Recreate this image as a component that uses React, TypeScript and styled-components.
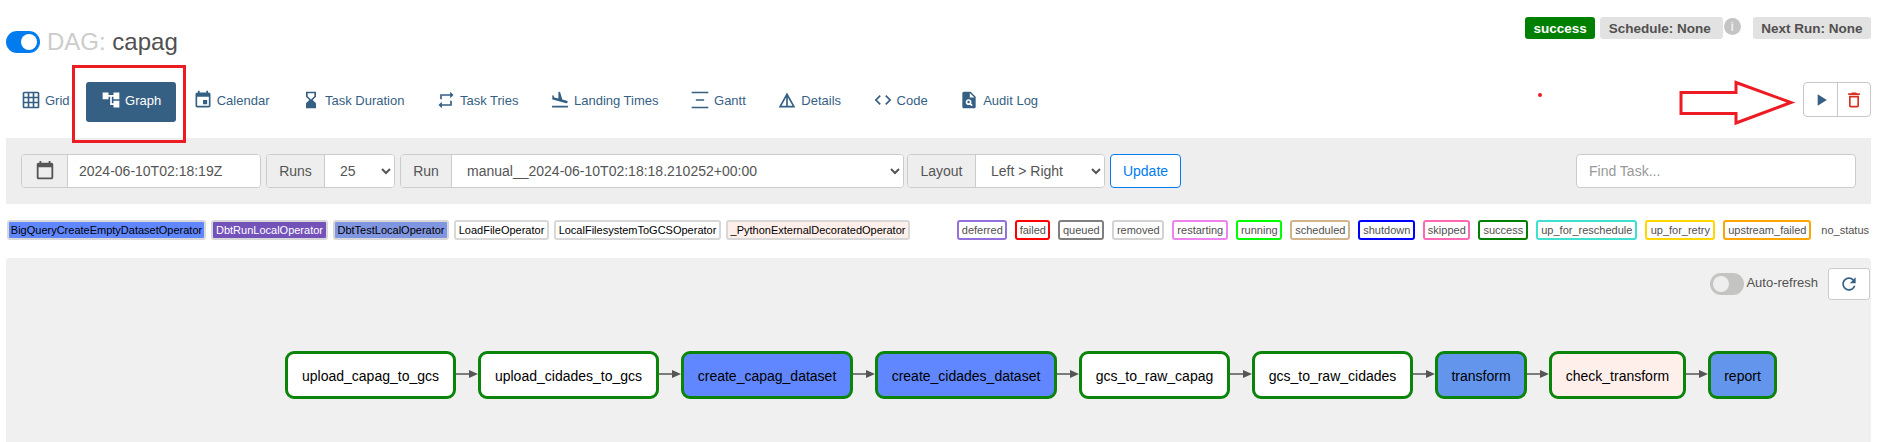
import React from 'react';
import styled, { createGlobalStyle } from 'styled-components';

const icons: Record<string, string> = {
    grid: 'M20 2H4c-1.1 0-2 .9-2 2v16c0 1.1.9 2 2 2h16c1.1 0 2-.9 2-2V4c0-1.1-.9-2-2-2zM8 20H4v-4h4v4zm0-6H4v-4h4v4zm0-6H4V4h4v4zm6 12h-4v-4h4v4zm0-6h-4v-4h4v4zm0-6h-4V4h4v4zm6 12h-4v-4h4v4zm0-6h-4v-4h4v4zm0-6h-4V4h4v4z',
    graph: 'M22 11V3h-7v3H9V3H2v8h7V8h2v10h4v3h7v-8h-7v3h-2V8h2v3z',
    calendar: 'M17 12h-5v5h5v-5zM16 1v2H8V1H6v2H5c-1.11 0-1.99.9-1.99 2L3 19c0 1.1.89 2 2 2h14c1.1 0 2-.9 2-2V5c0-1.1-.9-2-2-2h-1V1h-2zm3 18H5V8h14v11z',
    hourglass: 'M18 22l-.01-6L14 12l3.99-4.01L18 2H6v6l4 4-4 3.99V22h12zM8 7.5V4h8v3.5l-4 4-4-4z',
    repeat: 'M7 7h10v3l4-4-4-4v3H5v6h2V7zm10 10H7v-3l-4 4 4 4v-3h12v-6h-2v4z',
    land: 'M2.5 19h19v2h-19zm7.18-5.73l4.35 1.16 5.31 1.42c.8.21 1.62-.26 1.84-1.06.21-.8-.26-1.62-1.06-1.84l-5.31-1.42-2.76-9.02L10.12 2v8.28L5.15 8.95l-.93-2.32-1.45-.39v5.17l1.6.43 5.31 1.43z',
    gantt: 'M2 2h20v2H2zM2 20h20v2H2zM7 11h10v2H7z',
    details: 'M12 3L2 21h20L12 3zm1 5.92L18.6 19H13V8.92zm-2 0V19H5.4L11 8.92z',
    code: 'M9.4 16.6L4.8 12l4.6-4.6L8 6l-6 6 6 6 1.4-1.4zm5.2 0l4.6-4.6-4.6-4.6L16 6l6 6-6 6-1.4-1.4z',
    audit: 'M14 2H6C4.9 2 4.01 2.9 4.01 4L4 20c0 1.1.89 2 1.99 2H18c1.1 0 2-.9 2-2V8L14 2zm1.04 17.45l-1.88-1.88c-1.33.71-3.01.53-4.13-.59-1.37-1.37-1.37-3.58 0-4.95 1.37-1.37 3.58-1.37 4.95 0 1.12 1.12 1.31 2.8.59 4.13l1.88 1.88-1.41 1.41zM13 9V3.5L18.5 9H13zM11.5 13a1.5 1.5 0 1 0 0 3 1.5 1.5 0 0 0 0-3z',
    play: 'M8 5v14l11-7z',
    trash: 'M6 19c0 1.1.9 2 2 2h8c1.1 0 2-.9 2-2V7H6v12zM8 9h8v10H8V9zm7.5-5l-1-1h-5l-1 1H5v2h14V4z',
    date: 'M19 3h-1V1h-2v2H8V1H6v2H5c-1.11 0-2 .9-2 2v14c0 1.1.89 2 2 2h14c1.1 0 2-.9 2-2V5c0-1.1-.9-2-2-2zm0 16H5V8h14v11z',
    refresh: 'M17.65 6.35C16.2 4.9 14.21 4 12 4c-4.42 0-7.99 3.58-7.99 8s3.57 8 7.99 8c3.73 0 6.84-2.55 7.73-6h-2.08c-.82 2.33-3.04 4-5.65 4-3.31 0-6-2.69-6-6s2.69-6 6-6c1.66 0 3.14.69 4.22 1.78L13 11h7V4l-2.35 2.35z',
};

const Icon: React.FC<{ name: string; size?: number }> = ({ name, size = 20 }) => (
    <svg width={size} height={size} viewBox="0 0 24 24" fill="currentColor" style={{ flexShrink: 0 }}>
        <path d={icons[name]} fillRule="evenodd" />
    </svg>
);

const tabs = [
    { label: 'Grid', icon: 'grid' },
    { label: 'Graph', icon: 'graph', active: true },
    { label: 'Calendar', icon: 'calendar' },
    { label: 'Task Duration', icon: 'hourglass' },
    { label: 'Task Tries', icon: 'repeat' },
    { label: 'Landing Times', icon: 'land' },
    { label: 'Gantt', icon: 'gantt' },
    { label: 'Details', icon: 'details' },
    { label: 'Code', icon: 'code' },
    { label: 'Audit Log', icon: 'audit' },
];

const operators = [
    { label: 'BigQueryCreateEmptyDatasetOperator', width: 199, bg: '#6087ff' },
    { label: 'DbtRunLocalOperator', width: 117, bg: '#7352ba', fg: '#fff' },
    { label: 'DbtTestLocalOperator', width: 116, bg: '#8196e0' },
    { label: 'LoadFileOperator', width: 95, bg: '#fff' },
    { label: 'LocalFilesystemToGCSOperator', width: 167, bg: '#fff' },
    { label: '_PythonExternalDecoratedOperator', width: 184, bg: '#ffefeb' },
];

const states = [
    { label: 'deferred', width: 50, color: 'mediumpurple' },
    { label: 'failed', width: 35, color: 'red' },
    { label: 'queued', width: 46, color: 'gray' },
    { label: 'removed', width: 52, color: 'lightgrey' },
    { label: 'restarting', width: 56, color: 'violet' },
    { label: 'running', width: 46, color: 'lime' },
    { label: 'scheduled', width: 60, color: 'tan' },
    { label: 'shutdown', width: 57, color: 'blue' },
    { label: 'skipped', width: 47, color: 'hotpink' },
    { label: 'success', width: 50, color: 'green' },
    { label: 'up_for_reschedule', width: 101, color: 'turquoise' },
    { label: 'up_for_retry', width: 70, color: 'gold' },
    { label: 'upstream_failed', width: 88, color: 'orange' },
];

const tasks = [
    { label: 'upload_capag_to_gcs', width: 171, bg: '#fff' },
    { label: 'upload_cidades_to_gcs', width: 181, bg: '#fff' },
    { label: 'create_capag_dataset', width: 172, bg: '#6087ff' },
    { label: 'create_cidades_dataset', width: 182, bg: '#6087ff' },
    { label: 'gcs_to_raw_capag', width: 151, bg: '#fff' },
    { label: 'gcs_to_raw_cidades', width: 161, bg: '#fff' },
    { label: 'transform', width: 92, bg: '#6495ed' },
    { label: 'check_transform', width: 137, bg: '#ffefeb' },
    { label: 'report', width: 69, bg: '#6495ed' },
];

const App: React.FC = () => {
    return (
        <>
            <GlobalStyle />
            <Page>
                <Header>
                    <Title>
                        <Toggle $on />
                        <TitleMuted>DAG:</TitleMuted> capag
                    </Title>
                    <Badges>
                        <Badge $success>success</Badge>
                        <ScheduleBadge>Schedule: None</ScheduleBadge>
                        <InfoDot>i</InfoDot>
                        <NextRunBadge>Next Run: None</NextRunBadge>
                    </Badges>
                </Header>

                <NavRow>
                    <Tabs>
                        {tabs.map(tab => (
                            <Tab key={tab.label} $active={tab.active}>
                                <Icon name={tab.icon} size={20} />
                                {tab.label}
                            </Tab>
                        ))}
                    </Tabs>
                    <ActionGroup>
                        <ActionButton $color="#365f84"><Icon name="play" size={20} /></ActionButton>
                        <ActionButton $color="#d9311f"><Icon name="trash" size={20} /></ActionButton>
                    </ActionGroup>
                </NavRow>

                <Toolbar>
                    <InputGroup $width={240}>
                        <Addon $width={46}><Icon name="date" size={22} /></Addon>
                        <TextField readOnly value="2024-06-10T02:18:19Z" />
                    </InputGroup>
                    <InputGroup $width={129}>
                        <Addon $width={58}>Runs</Addon>
                        <Select defaultValue="25"><option>25</option></Select>
                    </InputGroup>
                    <InputGroup $width={504}>
                        <Addon $width={51}>Run</Addon>
                        <Select defaultValue="m"><option value="m">manual__2024-06-10T02:18:18.210252+00:00</option></Select>
                    </InputGroup>
                    <LayoutGroup $width={198}>
                        <Addon $width={68}>Layout</Addon>
                        <Select defaultValue="lr"><option value="lr">{'Left > Right'}</option></Select>
                    </LayoutGroup>
                    <UpdateButton>Update</UpdateButton>
                    <FindTask placeholder="Find Task..." />
                </Toolbar>

                <LegendRow>
                    <OperatorLegend>
                        {operators.map(op => (
                            <OperatorChip key={op.label} $width={op.width} $bg={op.bg} $fg={op.fg}>{op.label}</OperatorChip>
                        ))}
                    </OperatorLegend>
                    <StateLegend>
                        {states.map(state => (
                            <StateChip key={state.label} $width={state.width} $color={state.color}>{state.label}</StateChip>
                        ))}
                        <NoStatus>no_status</NoStatus>
                    </StateLegend>
                </LegendRow>

                <GraphPanel>
                    <RefreshRow>
                        <Toggle />
                        <RefreshLabel>Auto-refresh</RefreshLabel>
                        <RefreshButton><Icon name="refresh" size={20} /></RefreshButton>
                    </RefreshRow>
                    <Flow>
                        {tasks.map((task, i) => (
                            <React.Fragment key={task.label}>
                                {i > 0 && (
                                    <svg width="22" height="10" viewBox="0 0 22 10" style={{ marginTop: -2 }}>
                                        <path d="M0 5h14" stroke="#555" strokeWidth="1.5" />
                                        <path d="M13 1l9 4-9 4z" fill="#555" />
                                    </svg>
                                )}
                                <TaskNode $bg={task.bg} $width={task.width}>{task.label}</TaskNode>
                            </React.Fragment>
                        ))}
                    </Flow>
                </GraphPanel>

                <GraphHighlight />
                <RedDot />
                <RedArrow width="118" height="46" viewBox="0 0 118 46">
                    <path d="M2 12.5h55V2.5L112 22.5 57 43V33.5H2z" fill="none" stroke="#ed1c24" strokeWidth="3" />
                </RedArrow>
            </Page>
        </>
    );
};

const GlobalStyle = createGlobalStyle`
  html, body {
    margin: 0;
    background: #fff;
    font-family: "Liberation Sans", Arial, sans-serif;
    color: #51504f;
  }
  * {
    box-sizing: border-box;
  }
`;

const Page = styled.div`
  position: relative;
  width: 1887px;
  height: 442px;
  overflow: hidden;
  padding: 0 16px 0 6px;
`;

const Header = styled.header`
  display: flex;
  justify-content: space-between;
  align-items: flex-start;
  height: 82px;
  padding-top: 17px;
`;

const Title = styled.h4`
  display: flex;
  align-items: center;
  margin: 14px 0 0;
  height: 22px;
  font-size: 24px;
  font-weight: 400;
  line-height: 20px;
  white-space: pre;
`;

const TitleMuted = styled.span`
  color: #ccc;
  margin-left: 7px;
`;

const Toggle = styled.span<{ $on?: boolean }>`
  position: relative;
  display: inline-block;
  flex-shrink: 0;
  width: 34px;
  height: 22px;
  border-radius: 11px;
  background: ${p => (p.$on ? '#017cee' : '#c4c4c2')};
  &::after {
    content: '';
    position: absolute;
    top: 3px;
    ${p => (p.$on ? 'right: 3px;' : 'left: 3px;')}
    width: 16px;
    height: 16px;
    border-radius: 50%;
    background: ${p => (p.$on ? '#fff' : '#eee')};
  }
`;

const Badges = styled.div`
  display: flex;
  align-items: flex-start;
`;

const Badge = styled.span<{ $success?: boolean }>`
  display: flex;
  align-items: center;
  height: 22px;
  padding: 0 8.5px;
  margin-right: 5px;
  border-radius: 3px;
  font-size: 13.5px;
  font-weight: 700;
  background: ${p => (p.$success ? '#008000' : '#e2e2e2')};
  color: ${p => (p.$success ? '#fff' : '#51504f')};
`;

const ScheduleBadge = styled(Badge)`
  padding-right: 12px;
  margin-right: 1px;
`;

const NextRunBadge = styled(Badge)`
  margin: 0 0 0 12px;
`;

const InfoDot = styled.span`
  display: flex;
  align-items: center;
  justify-content: center;
  width: 17px;
  height: 17px;
  margin-top: 1px;
  border-radius: 50%;
  background: #c4c4c4;
  color: #eee;
  font-size: 12px;
  font-weight: 700;
`;

const NavRow = styled.div`
  display: flex;
  justify-content: space-between;
  align-items: flex-start;
  height: 56px;
`;

const Tabs = styled.nav`
  display: flex;
  gap: 1.5px;
`;

const Tab = styled.a<{ $active?: boolean }>`
  display: flex;
  align-items: center;
  gap: 4px;
  height: 40px;
  padding: 0 15px 4px;
  border-radius: 3px;
  font-size: 13px;
  background: ${p => (p.$active ? '#365f84' : 'transparent')};
  color: ${p => (p.$active ? '#fff' : '#365f84')};
`;

const ActionGroup = styled.div`
  display: flex;
  height: 35px;
  border: 1px solid #c8c8c8;
  border-radius: 4px;
`;

const ActionButton = styled.span<{ $color: string }>`
  display: flex;
  align-items: center;
  justify-content: center;
  width: 33px;
  color: ${p => p.$color};
  & + & {
    border-left: 1px solid #c8c8c8;
  }
`;

const Toolbar = styled.div`
  display: flex;
  align-items: center;
  height: 66px;
  padding: 0 15px;
  gap: 5px;
  background: #eee;
`;

const InputGroup = styled.div<{ $width: number }>`
  display: flex;
  width: ${p => p.$width}px;
  height: 34px;
  border: 1px solid #ccc;
  border-radius: 4px;
  background: #fff;
  overflow: hidden;
  font-size: 14px;
`;

const LayoutGroup = styled(InputGroup)`
  margin-left: -2px;
`;

const Addon = styled.span<{ $width: number }>`
  display: flex;
  align-items: center;
  justify-content: center;
  flex-shrink: 0;
  width: ${p => p.$width}px;
  background: #eee;
  border-right: 1px solid #ccc;
  color: #555;
`;

const TextField = styled.input`
  flex: 1;
  min-width: 0;
  padding: 0 11px;
  border: 0;
  outline: 0;
  font: inherit;
  color: #555;
`;

const Select = styled.select`
  flex: 1;
  min-width: 0;
  padding: 0 11px;
  border: 0;
  outline: 0;
  background: #fff;
  font: inherit;
  color: #555;
`;

const UpdateButton = styled.button`
  width: 71px;
  height: 34px;
  padding: 0;
  border: 1px solid #017cee;
  border-radius: 4px;
  background: #fff;
  color: #017cee;
  font: inherit;
  font-size: 14px;
`;

const FindTask = styled.input`
  width: 280px;
  height: 34px;
  margin-left: auto;
  padding: 0 12px;
  border: 1px solid #ccc;
  border-radius: 4px;
  outline: 0;
  font: inherit;
  font-size: 14px;
  &::placeholder {
    color: #999;
  }
`;

const LegendRow = styled.div`
  display: flex;
  justify-content: space-between;
  align-items: flex-start;
  height: 54px;
  padding: 16px 2px 0 1px;
`;

const OperatorLegend = styled.div`
  display: flex;
  gap: 5px;
`;

const StateLegend = styled.div`
  display: flex;
  align-items: center;
  gap: 8px;
`;

const OperatorChip = styled.span<{ $width: number; $bg: string; $fg?: string }>`
  width: ${p => p.$width}px;
  height: 20px;
  border: 2px solid #d8d8d8;
  border-radius: 3px;
  font-size: 11px;
  line-height: 16px;
  text-align: center;
  white-space: nowrap;
  background: ${p => p.$bg};
  color: ${p => p.$fg || '#000'};
`;

const StateChip = styled.span<{ $width: number; $color: string }>`
  width: ${p => p.$width}px;
  height: 20px;
  border: 2px solid ${p => p.$color};
  border-radius: 3px;
  font-size: 11px;
  line-height: 16px;
  text-align: center;
  white-space: nowrap;
  background: #fff;
  color: #51504f;
`;

const NoStatus = styled.span`
  margin-left: 2px;
  font-size: 11px;
  color: #51504f;
`;

const GraphPanel = styled.section`
  height: 184px;
  padding-top: 10px;
  border-radius: 4px 4px 0 0;
  background: #f0f0f0;
`;

const RefreshRow = styled.div`
  display: flex;
  align-items: center;
  justify-content: flex-end;
  height: 32px;
  padding-right: 1px;
`;

const RefreshLabel = styled.span`
  margin: 0 10px 0 2px;
  padding-bottom: 3px;
  font-size: 13px;
  color: #51504f;
`;

const RefreshButton = styled.span`
  display: flex;
  align-items: center;
  justify-content: center;
  width: 42px;
  height: 32px;
  border: 1px solid #ccc;
  border-radius: 3px;
  background: #fff;
  color: #365f84;
`;

const Flow = styled.div`
  display: flex;
  align-items: center;
  padding: 51px 0 0 279px;
`;

const TaskNode = styled.div<{ $bg: string; $width: number }>`
  display: flex;
  align-items: center;
  justify-content: center;
  flex-shrink: 0;
  width: ${p => p.$width}px;
  height: 48px;
  padding: 1px 0 0 0;
  border: 3px solid #0b840b;
  border-radius: 9px;
  background: ${p => p.$bg};
  color: #000;
  font-size: 14px;
`;

const GraphHighlight = styled.div`
  position: absolute;
  left: 72px;
  top: 65px;
  width: 114px;
  height: 78px;
  border: 3px solid #ed1c24;
`;

const RedDot = styled.div`
  position: absolute;
  left: 1538px;
  top: 93px;
  width: 4px;
  height: 4px;
  border-radius: 50%;
  background: #ed1c24;
`;

const RedArrow = styled.svg`
  position: absolute;
  left: 1679px;
  top: 80px;
`;

export default App;
